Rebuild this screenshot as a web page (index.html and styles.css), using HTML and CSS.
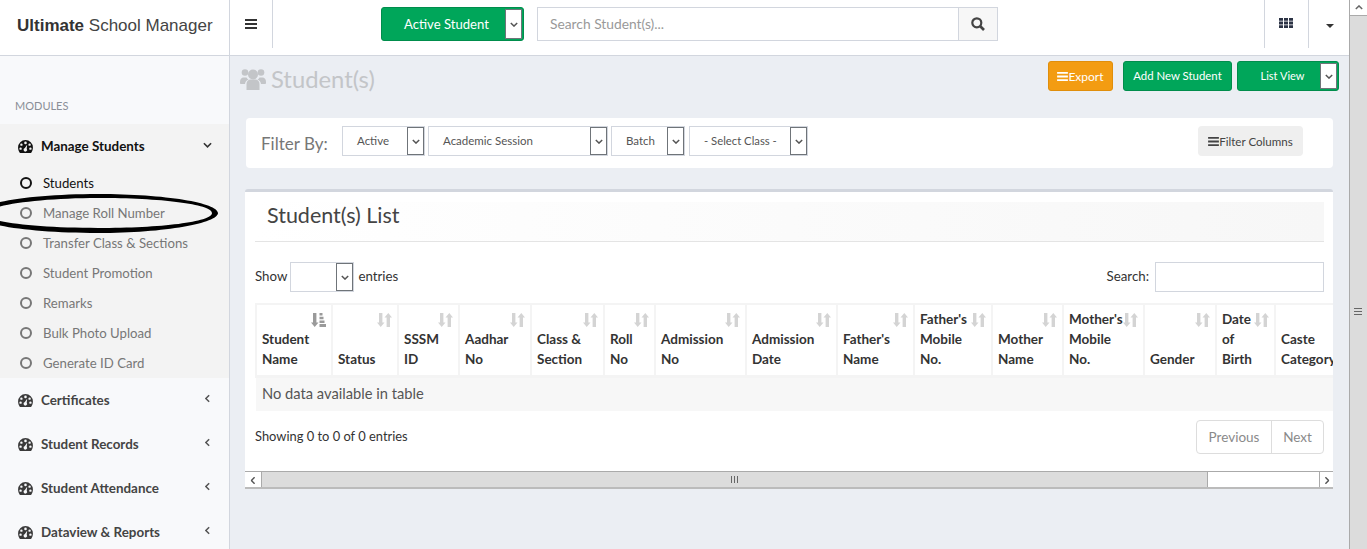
FILE: index.html
```html
<!DOCTYPE html>
<html lang="en">
<head>
<meta charset="utf-8">
<title>Ultimate School Manager</title>
<link rel="stylesheet" href="styles.css">
</head>
<body>
<svg class="defs" width="0" height="0" aria-hidden="true">
  <symbol id="gauge" viewBox="0 0 16 14"><path fill-rule="evenodd" d="M8 0a8 8 0 0 1 8 8c0 2.300-.8 4.300-2 6H2C.8 12.300 0 10.300 0 8a8 8 0 0 1 8-8zM8 1.700a1.400 1.400 0 1 0 0 2.800 1.400 1.400 0 0 0 0-2.800zM3.600 3.700a1.300 1.300 0 1 0 0 2.600 1.300 1.300 0 0 0 0-2.600zM12.400 3.700a1.300 1.300 0 1 0 0 2.600 1.300 1.300 0 0 0 0-2.600zM2.700 8a1.300 1.300 0 1 0 0 2.600 1.300 1.300 0 0 0 0-2.600zM13.300 8a1.300 1.300 0 1 0 0 2.600 1.300 1.300 0 0 0 0-2.600zM9.800 5L7.300 8.700a1.900 1.900 0 1 0 2 .6z"/></symbol>
  <symbol id="chev" viewBox="0 0 10 6"><path d="M1 1l4 4 4-4" fill="none" stroke="currentColor" stroke-width="1.800"/></symbol>
  <symbol id="sort" viewBox="0 0 15 14"><path d="M2 0h3.400v9.500H7.500L3.700 14 0 9.500h2zM11.300 0L15 4.500h-2V14H9.600V4.500H7.500z"/></symbol>
  <symbol id="sorted" viewBox="0 0 15 14"><path d="M2 0h3.400v9.500H7.500L3.700 14 0 9.500h2zM8.500 0h3v2.500h-3zM8.500 3.700h4v2.500h-4zM8.500 7.400h5v2.500h-5zM8.500 11.100H15V14H8.500z"/></symbol>
  <symbol id="bars" viewBox="0 0 12 10"><path d="M0 0h12v2H0zM0 4h12v2H0zM0 8h12v2H0z"/></symbol>
</svg>

<div class="window">
  <div class="page">
    <header class="topbar">
      <div class="brand"><b>Ultimate</b> School Manager</div>
      <div class="cell cell-menu"><svg class="ico-menu"><use href="#bars"/></svg></div>
      <div class="green-select top-select">
        <span class="green-label">Active Student</span>
        <span class="arrow"><svg><use href="#chev"/></svg></span>
      </div>
      <div class="search">
        <div class="search-input">Search Student(s)...</div>
        <div class="search-btn">
          <svg viewBox="0 0 14 14"><circle cx="5.800" cy="5.800" r="4.500" fill="none" stroke="currentColor" stroke-width="2.200"/><path d="M9 9l4 4" stroke="currentColor" stroke-width="2.600"/></svg>
        </div>
      </div>
      <div class="top-right">
        <div class="cell cell-grid">
          <svg viewBox="0 0 14 10"><path d="M0 0h4v2.800H0zM5 0h4v2.800H5zM10 0h4v2.800h-4zM0 3.600h4v2.800H0zM5 3.600h4v2.800H5zM10 3.600h4v2.800h-4zM0 7.200h4V10H0zM5 7.200h4V10H5zM10 7.200h4V10h-4z"/></svg>
        </div>
        <div class="cell cell-caret"><span class="caret"></span></div>
      </div>
    </header>

    <div class="body">
      <aside class="sidebar">
        <div class="modules">MODULES</div>
        <section class="group open">
          <div class="group-head active">
            <svg class="gauge"><use href="#gauge"/></svg><span>Manage Students</span>
            <svg class="chev-down"><use href="#chev"/></svg>
          </div>
          <ul class="sub">
            <li class="current"><i class="ring"></i>Students</li>
            <li><i class="ring"></i>Manage Roll Number</li>
            <li><i class="ring"></i>Transfer Class &amp; Sections</li>
            <li><i class="ring"></i>Student Promotion</li>
            <li><i class="ring"></i>Remarks</li>
            <li><i class="ring"></i>Bulk Photo Upload</li>
            <li><i class="ring"></i>Generate ID Card</li>
          </ul>
        </section>
        <div class="group-head"><svg class="gauge"><use href="#gauge"/></svg><span>Certificates</span><svg class="chev-left"><use href="#chev"/></svg></div>
        <div class="group-head"><svg class="gauge"><use href="#gauge"/></svg><span>Student Records</span><svg class="chev-left"><use href="#chev"/></svg></div>
        <div class="group-head"><svg class="gauge"><use href="#gauge"/></svg><span>Student Attendance</span><svg class="chev-left"><use href="#chev"/></svg></div>
        <div class="group-head"><svg class="gauge"><use href="#gauge"/></svg><span>Dataview &amp; Reports</span><svg class="chev-left"><use href="#chev"/></svg></div>
      </aside>

      <main class="main">
        <div class="title-row">
          <h1 class="page-title">
            <svg viewBox="0 0 26 22"><circle cx="13" cy="6.500" r="5"/><circle cx="5" cy="4.500" r="3.300"/><circle cx="21" cy="4.500" r="3.300"/><path d="M6.500 22v-6c0-3 2-4.500 4-4.500h5c2 0 4 1.500 4 4.500v6z"/><path d="M0 14c0-3 1.500-4.500 3.500-4.500h3c.5 1 1.200 1.600 2 2-2 .8-3.300 2.300-3.500 4.500H1c-.6 0-1-.5-1-1zM26 14c0-3-1.500-4.500-3.500-4.500h-3c-.5 1-1.200 1.600-2 2 2 .8 3.300 2.300 3.500 4.500h4c.6 0 1-.5 1-1z"/></svg>
            Student(s)
          </h1>
          <div class="actions">
            <div class="btn orange"><svg><use href="#bars"/></svg>Export</div>
            <div class="btn green add">Add New Student</div>
            <div class="green-select view-select">
              <span class="green-label">List View</span>
              <span class="arrow"><svg><use href="#chev"/></svg></span>
            </div>
          </div>
        </div>

        <div class="filter-card">
          <span class="filter-label">Filter By:</span>
          <div class="select s-active"><span>Active</span><span class="arrow"><svg><use href="#chev"/></svg></span></div>
          <div class="select s-session"><span>Academic Session</span><span class="arrow"><svg><use href="#chev"/></svg></span></div>
          <div class="select s-batch"><span>Batch</span><span class="arrow"><svg><use href="#chev"/></svg></span></div>
          <div class="select s-class"><span>- Select Class -</span><span class="arrow"><svg><use href="#chev"/></svg></span></div>
          <div class="filter-cols"><svg><use href="#bars"/></svg>Filter Columns</div>
        </div>

        <section class="list-card">
          <h2 class="list-title">Student(s) List</h2>
          <div class="dt-top">
            <div class="show"><span class="dt-label">Show</span>
              <div class="select s-show"><span></span><span class="arrow"><svg><use href="#chev"/></svg></span></div>
              <span class="dt-label">entries</span></div>
            <div class="dt-search"><span class="dt-label">Search:</span> <div class="dt-input"></div></div>
          </div>
          <div class="table-clip">
            <table>
              <thead>
                <tr>
                  <th><svg class="sort on"><use href="#sorted"/></svg>Student Name</th>
                  <th><svg class="sort"><use href="#sort"/></svg>Status</th>
                  <th><svg class="sort"><use href="#sort"/></svg>SSSM ID</th>
                  <th><svg class="sort"><use href="#sort"/></svg>Aadhar No</th>
                  <th><svg class="sort"><use href="#sort"/></svg>Class &amp; Section</th>
                  <th><svg class="sort"><use href="#sort"/></svg>Roll No</th>
                  <th><svg class="sort"><use href="#sort"/></svg>Admission No</th>
                  <th><svg class="sort"><use href="#sort"/></svg>Admission Date</th>
                  <th><svg class="sort"><use href="#sort"/></svg>Father's Name</th>
                  <th><svg class="sort"><use href="#sort"/></svg>Father's<br>Mobile<br>No.</th>
                  <th><svg class="sort"><use href="#sort"/></svg>Mother Name</th>
                  <th><svg class="sort"><use href="#sort"/></svg>Mother's<br>Mobile<br>No.</th>
                  <th><svg class="sort"><use href="#sort"/></svg>Gender</th>
                  <th><svg class="sort"><use href="#sort"/></svg>Date<br>of<br>Birth</th>
                  <th>Caste Category</th>
                </tr>
              </thead>
              <tbody>
                <tr><td colspan="15">No data available in table</td></tr>
              </tbody>
            </table>
          </div>
          <div class="dt-bottom">
            <div class="info">Showing 0 to 0 of 0 entries</div>
            <div class="pager"><span class="prev">Previous</span><span class="next">Next</span></div>
          </div>
          <div class="hscroll">
            <span class="hbtn"><svg class="chev-left"><use href="#chev"/></svg></span>
            <span class="hthumb"><i></i></span>
            <span class="htrack"></span>
            <span class="hbtn right"><svg class="chev-right"><use href="#chev"/></svg></span>
          </div>
        </section>
      </main>
    </div>
  </div>

  <div class="vscroll">
    <div class="vbtn"><svg><use href="#chev"/></svg></div>
    <div class="vthumb"><i></i></div>
  </div>

  <svg class="scribble" viewBox="0 0 230 50" aria-hidden="true">
    <path fill-rule="evenodd" d="M-24 24C-24 13 30 4 98 4S218 13 218 23 166 43 98 43-24 35-24 24zM-15 24C-15 32 35 38 98 38S212 32 212 23 160 8 98 8-15 16-15 24z"/>
  </svg>
</div>
</body>
</html>
```
FILE: styles.css
```css
* { box-sizing: border-box; }
html, body { margin: 0; height: 100%; overflow: hidden; }
body { font-family: "Lato", "Noto Sans", sans-serif; font-size: 14px; color: #333; background: #ebeef3; }
.defs { position: absolute; }
svg { display: block; fill: currentColor; }

.window { position: relative; display: flex; height: 549px; width: 1367px; overflow: hidden; }
.page { width: 1349px; flex: none; display: flex; flex-direction: column; }

/* top bar */
.topbar { height: 56px; flex: none; display: flex; align-items: flex-start; background: #fff; border-bottom: 1px solid #d2d6de; }
.brand { width: 230px; height: 55px; border-right: 1px solid #d2d6de; padding-left: 17px; font: 17px/51px "Liberation Sans", Arial, sans-serif; color: #444; flex: none; }
.brand b { color: #333; }
.cell { height: 48px; display: flex; align-items: center; justify-content: center; flex: none; }
.cell-menu { width: 43px; border-right: 1px solid #d2d6de; padding-right: 1px; }
.ico-menu { width: 12px; height: 10px; color: #333; }
.top-select { margin: 7px 0 0 108px; width: 143px; height: 34px; }
.green-select { display: flex; background: #00a65a; border: 1px solid #008d4c; border-radius: 3px; color: #fff; padding: 1px; flex: none; }
.green-label { flex: 1; text-align: center; line-height: 30px; font-size: 13.100px; padding-left: 5px; }
.arrow { width: 17px; flex: none; background: #fff; border: 1px solid #6f7479; display: flex; align-items: center; justify-content: center; color: #555; }
.arrow svg { width: 8px; height: 5px; }
.search { margin: 7px 0 0 13px; width: 461px; height: 34px; display: flex; flex: none; }
.search-input { flex: 1; border: 1px solid #d2d6de; padding-left: 12px; line-height: 32px; color: #999; font-size: 13.800px; }
.search-btn { width: 39px; background: #f7f7f7; border: 1px solid #d2d6de; border-left: 0; display: flex; align-items: center; justify-content: center; color: #444; }
.search-btn svg { width: 14px; height: 14px; }
.top-right { margin-left: auto; display: flex; }
.cell-grid { width: 45px; border-left: 1px solid #d2d6de; border-right: 1px solid #d2d6de; color: #2c3345; padding: 0 2px 2px 0; }
.cell-grid svg { width: 14px; height: 10px; }
.cell-caret { width: 40px; padding-left: 1px; }
.caret { width: 0; height: 0; border-left: 4px solid transparent; border-right: 4px solid transparent; border-top: 4px solid #333; margin-top: 3px; }

.body { flex: 1; display: flex; min-height: 0; }

/* sidebar */
.sidebar { width: 230px; flex: none; background: #f8f9fb; border-right: 1px solid #d2d6de; overflow: hidden; }
.modules { height: 68px; padding: 43px 0 0 15px; font-size: 11px; line-height: 14px; color: #8a8f97; }
.group { background: #f3f3f3; }
.group-head { height: 44px; display: flex; align-items: center; padding-left: 18px; font-weight: 700; font-size: 13.400px; color: #444; position: relative; }
.group-head.active { color: #111; }
.gauge { width: 15px; height: 13px; margin-right: 8px; flex: none; }
.group-head .gauge { color: #3a3a3a; }
.group-head.active .gauge { color: #111; }
.chev-down { position: absolute; left: 203px; top: 18px; width: 9px; height: 6px; color: #333; }
.chev-left { position: absolute; left: 203px; top: 18px; width: 9px; height: 5px; color: #555; transform: rotate(90deg); }
.sub { list-style: none; margin: 0; padding: 0; }
.sub li { height: 30px; display: flex; align-items: center; padding-left: 20px; font-size: 13.200px; color: #777; }
.sub li.current { color: #111; }
.ring { width: 12px; height: 12px; border: 2px solid #777; border-radius: 50%; margin-right: 11px; flex: none; }
.current .ring { border-color: #111; }

/* main */
.main { flex: 1; min-width: 0; overflow: hidden; }
.title-row { height: 62px; display: flex; justify-content: space-between; padding: 5px 10px 0 10px; }
.page-title { margin: 0; display: flex; align-items: center; height: 36px; font-size: 23.800px; font-weight: 400; color: #c3c5c8; gap: 5px; }
.page-title svg { width: 26px; height: 22px; margin-top: -1px; }
.actions { display: flex; align-items: flex-start; }
.btn { height: 30px; border-radius: 3px; font-size: 12px; color: #fff; display: flex; align-items: center; justify-content: center; }
.btn svg, .filter-cols svg { width: 11px; height: 9px; }
.orange { width: 65px; background: #f39c12; border: 1px solid #e08e0b; }
.green { background: #00a65a; border: 1px solid #008d4c; }
.add { width: 109px; margin-left: 10px; font-size: 11.400px; padding-bottom: 2px; }
.view-select { width: 102px; height: 30px; margin-left: 5px; }
.view-select .green-label { line-height: 26px; padding-left: 6px; font-size: 11px; }

.filter-card { margin: 0 16px 0 16px; height: 50px; background: #fff; border-radius: 4px; display: flex; align-items: flex-start; padding: 8px 0 0 15px; }
.filter-label { font-size: 17px; line-height: 36px; color: #777; width: 81px; flex: none; }
.select { height: 30px; display: flex; border: 1px solid #d2d6de; background: #fff; font-size: 11.500px; color: #555; flex: none; }
.select > span:first-child { flex: 1; padding-left: 14px; line-height: 28px; }
.s-active { width: 83px; margin-right: 3px; }
.s-session { width: 180px; margin-right: 3px; }
.s-batch { width: 74px; margin-right: 4px; }
.s-class { width: 119px; font-size: 11.300px; }
.filter-cols { margin-left: auto; margin-right: 30px; width: 105px; height: 30px; background: #efefef; border-radius: 4px; display: flex; align-items: center; justify-content: center; font-size: 11.600px; color: #444; }

.list-card { margin: 21px 16px 0 15px; background: #fff; border-top: 3px solid #d2d6de; border-radius: 3px 3px 0 0; padding-top: 10px; }
.list-title { margin: 0 9px 0 10px; height: 40px; padding-left: 12px; font-size: 21.500px; line-height: 26px; font-weight: 400; color: #444; background: linear-gradient(90deg, #fff, #f7f7f7); border-bottom: 1px solid #e4e4e4; }
.dt-top { display: flex; justify-content: space-between; margin: 20px 9px 0 10px; height: 30px; align-items: center; font-size: 13.300px; }
.dt-label { margin-bottom: 2px; }
.show { display: flex; align-items: center; gap: 3px; }
.s-show { width: 64px; margin-right: 1px; }
.dt-search { display: flex; align-items: center; gap: 6px; }
.dt-input { width: 169px; height: 30px; border: 1px solid #d2d6de; }
.table-clip { margin: 11px 0 0 10px; overflow: hidden; }
table { border-collapse: collapse; table-layout: fixed; width: 1089px; }
th { position: relative; height: 72px; vertical-align: bottom; text-align: left; font-size: 13.500px; line-height: 20px; padding: 2px 4px 6px 5px; border: 2px solid #f4f4f4; border-bottom-width: 3px; color: #333; font-weight: 700; }
th:nth-child(1) { width: 76px; }
th:nth-child(2) { width: 66px; }
th:nth-child(3) { width: 61px; }
th:nth-child(4) { width: 72px; }
th:nth-child(5) { width: 73px; }
th:nth-child(6) { width: 51px; }
th:nth-child(7) { width: 91px; }
th:nth-child(8) { width: 91px; }
th:nth-child(9) { width: 77px; }
th:nth-child(10) { width: 78px; }
th:nth-child(11) { width: 71px; }
th:nth-child(12) { width: 81px; }
th:nth-child(13) { width: 72px; }
th:nth-child(14) { width: 59px; }
th:nth-child(15) { width: 90px; }
.sort { position: absolute; right: 5px; top: 8px; width: 15px; height: 14px; color: #d4d4d4; }
.sort.on { color: #9a9a9a; }
td { height: 35px; background: #f7f7f7; padding: 0 0 2px 6px; font-size: 14.700px; color: #555; border: 0; }
.dt-bottom { display: flex; justify-content: space-between; margin: 9px 9px 0 10px; height: 34px; }
.info { font-size: 12.900px; line-height: 32px; }
.pager { width: 128px; display: flex; border: 1px solid #ddd; border-radius: 4px; color: #8a8a8a; line-height: 32px; font-size: 13.500px; }
.prev { width: 75px; text-align: center; border-right: 1px solid #ddd; }
.next { flex: 1; text-align: center; }
.hscroll { margin-top: 17px; height: 18px; display: flex; border-top: 1px solid #aaa; border-bottom: 2px solid #bbb; background: #fff; }
.hbtn { position: relative; width: 17px; flex: none; border-right: 1px solid #aaa; background: #fff; }
.hbtn.right { width: 14px; border-right: 0; border-left: 1px solid #aaa; }
.hbtn .chev-left { left: 4px; top: 6px; width: 8px; height: 5px; }
.chev-right { position: absolute; left: 3px; top: 6px; width: 8px; height: 5px; color: #555; transform: rotate(-90deg); }
.hthumb { width: 946px; flex: none; background: #dcdcdc; border-right: 1px solid #aaa; display: flex; align-items: center; justify-content: center; }
.hthumb i { width: 8px; height: 7px; background: repeating-linear-gradient(90deg, #666 0 1px, transparent 1px 3px); }
.htrack { flex: 1; }

/* page scrollbar */
.vscroll { width: 18px; flex: none; border-left: 1px solid #aaa; display: flex; flex-direction: column; background: #dcdcdc; }
.vbtn { height: 16px; background: #fff; border-bottom: 1px solid #aaa; display: flex; align-items: center; justify-content: center; color: #666; }
.vbtn svg { width: 8px; height: 5px; transform: rotate(180deg); }
.vthumb { flex: 1; padding-top: 292px; }
.vthumb i { display: block; width: 8px; height: 7px; margin-left: 4px; background: repeating-linear-gradient(180deg, #666 0 1px, transparent 1px 3px); }

/* hand-drawn ellipse over the sidebar */
.scribble { position: absolute; left: 0; top: 190px; width: 230px; height: 50px; overflow: hidden; color: #000; }
```
